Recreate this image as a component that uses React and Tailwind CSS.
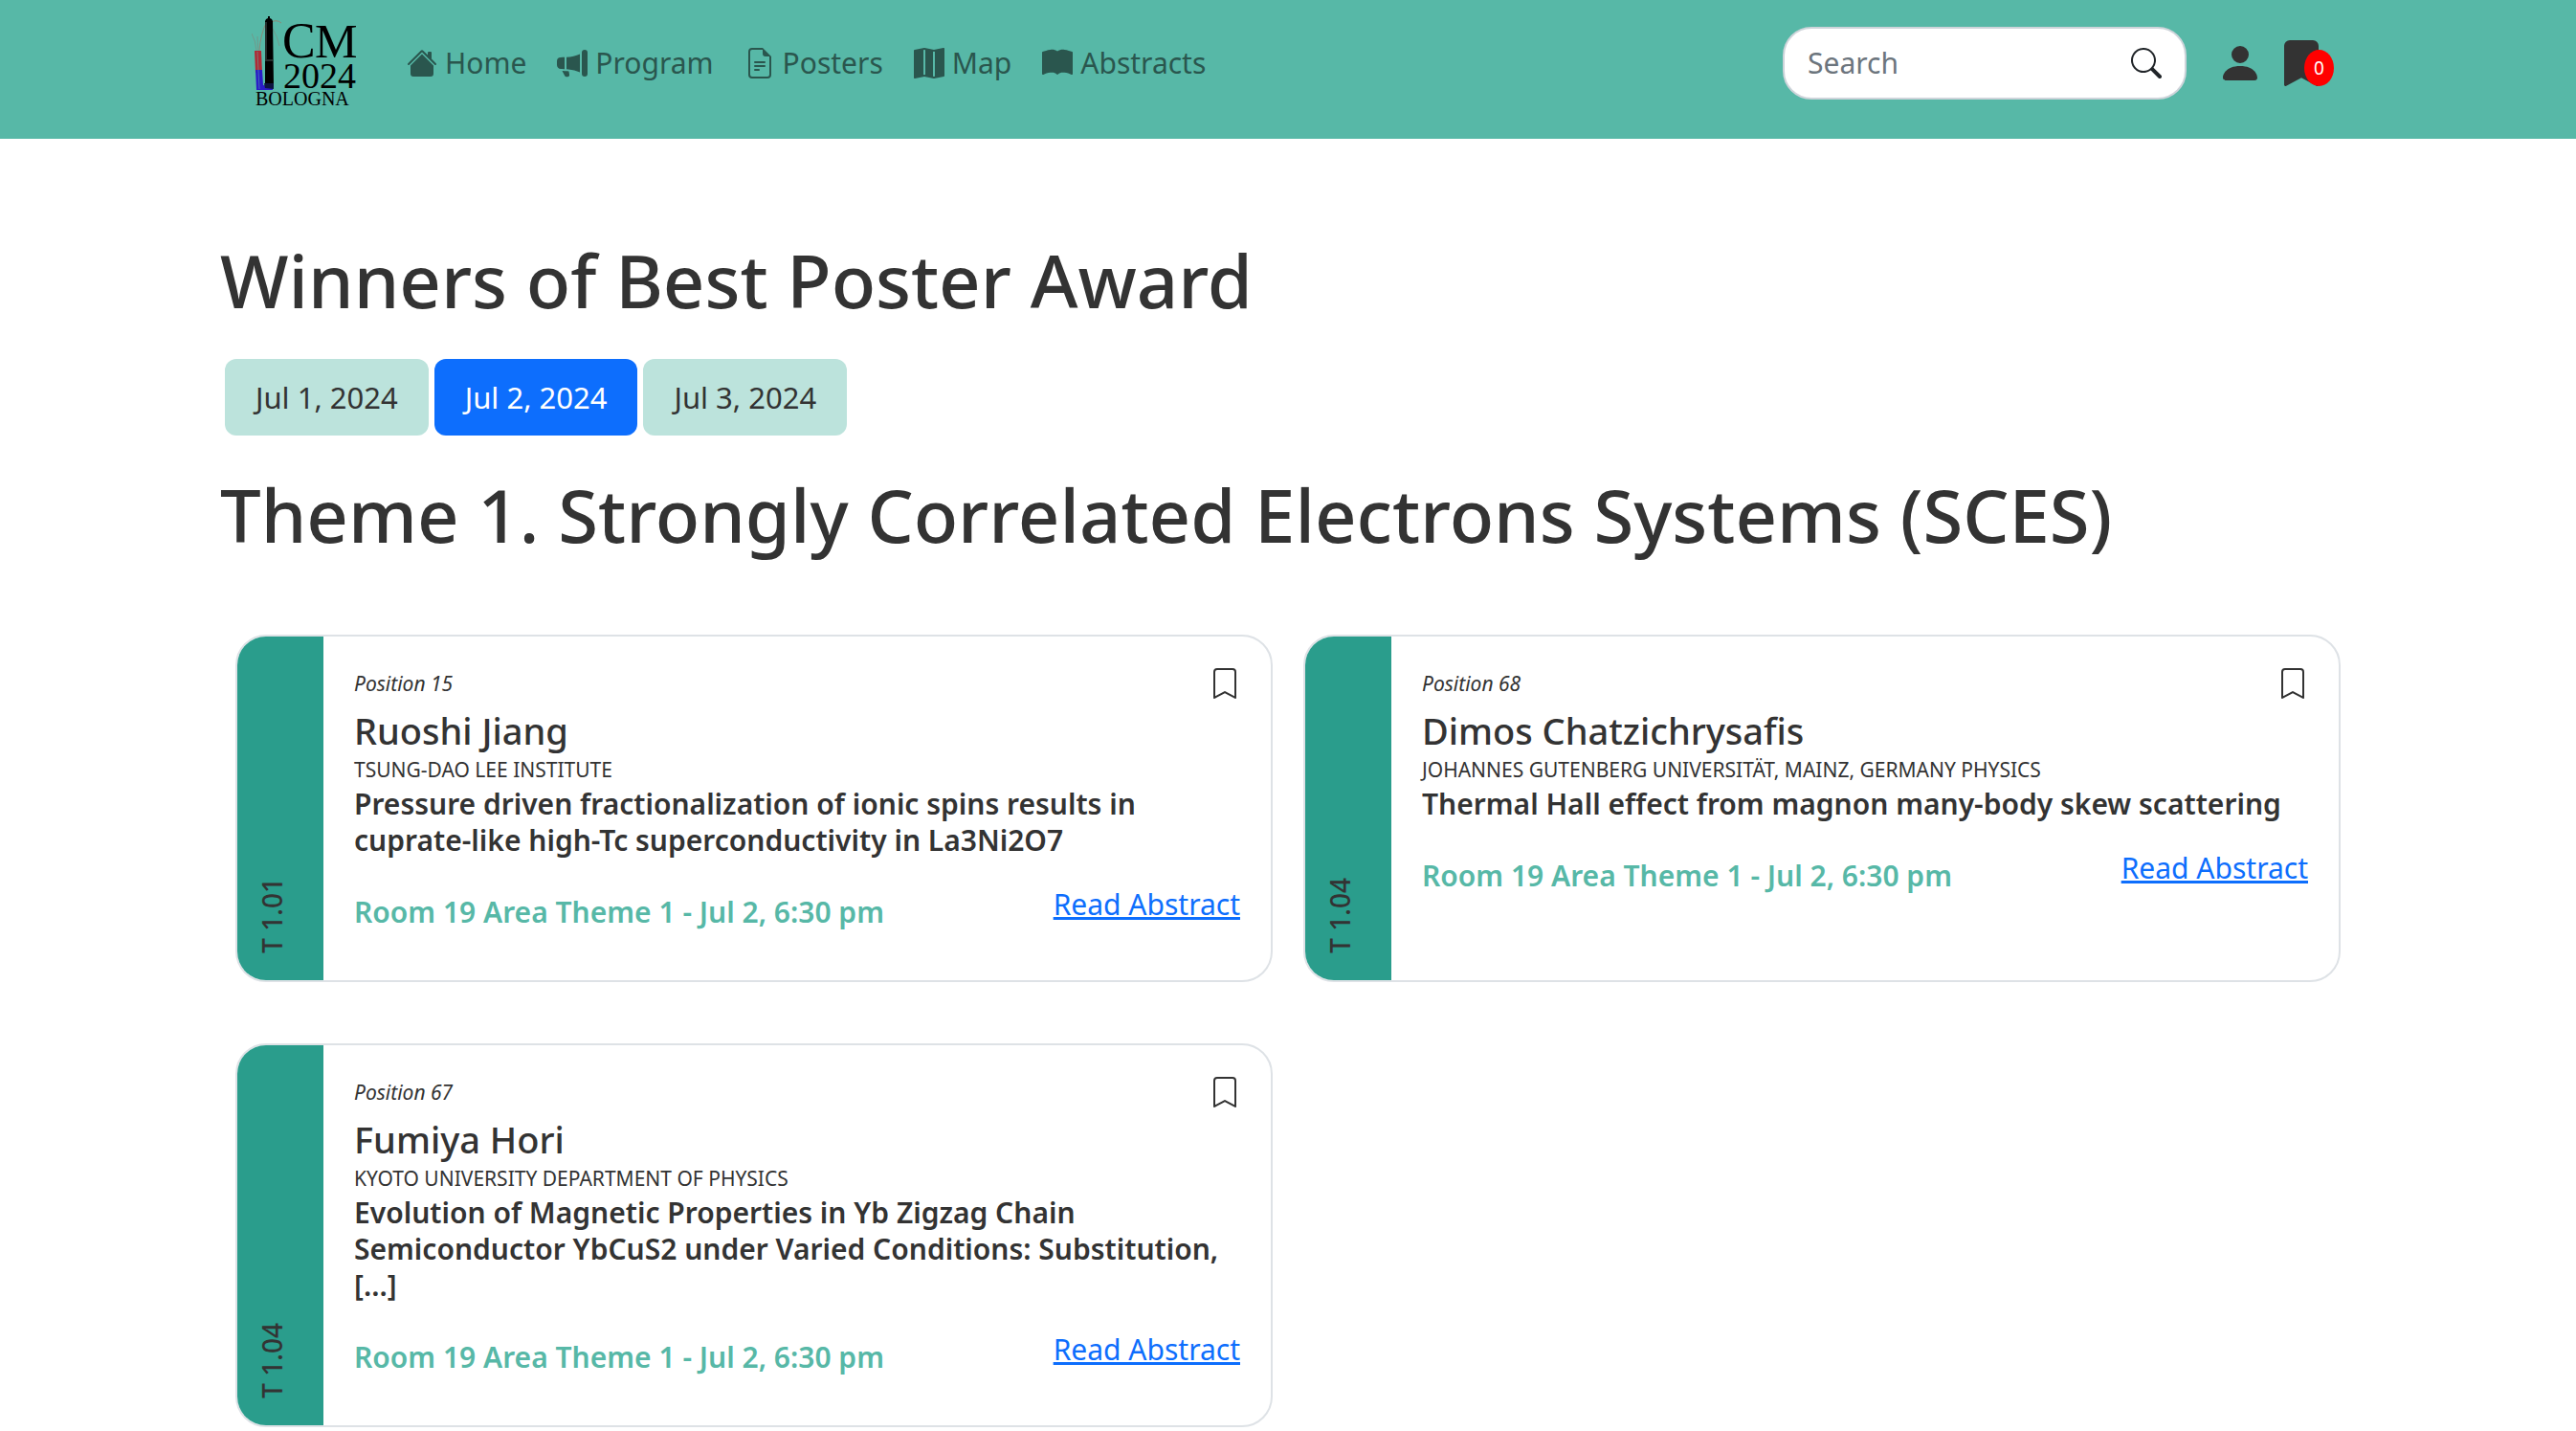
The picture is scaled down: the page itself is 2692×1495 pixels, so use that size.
import {
  BsHouseFill,
  BsMegaphoneFill,
  BsFileEarmarkText,
  BsMapFill,
  BsBookFill,
  BsSearch,
  BsPersonFill,
  BsBookmarkFill,
  BsBookmark,
} from "react-icons/bs";

const navItems = [
  { label: "Home", Icon: BsHouseFill },
  { label: "Program", Icon: BsMegaphoneFill },
  { label: "Posters", Icon: BsFileEarmarkText },
  { label: "Map", Icon: BsMapFill },
  { label: "Abstracts", Icon: BsBookFill },
];

const days = ["Jul 1, 2024", "Jul 2, 2024", "Jul 3, 2024"];
const activeDay = "Jul 2, 2024";

const posters = [
  {
    code: "T 1.01",
    position: "Position 15",
    author: "Ruoshi Jiang",
    institute: "TSUNG-DAO LEE INSTITUTE",
    title:
      "Pressure driven fractionalization of ionic spins results in cuprate-like high-Tc superconductivity in La3Ni2O7",
    slot: "Room 19 Area Theme 1 - Jul 2, 6:30 pm",
  },
  {
    code: "T 1.04",
    position: "Position 68",
    author: "Dimos Chatzichrysafis",
    institute: "JOHANNES GUTENBERG UNIVERSITÄT, MAINZ, GERMANY PHYSICS",
    title: "Thermal Hall effect from magnon many-body skew scattering",
    slot: "Room 19 Area Theme 1 - Jul 2, 6:30 pm",
  },
  {
    code: "T 1.04",
    position: "Position 67",
    author: "Fumiya Hori",
    institute: "KYOTO UNIVERSITY DEPARTMENT OF PHYSICS",
    title:
      "Evolution of Magnetic Properties in Yb Zigzag Chain Semiconductor YbCuS2 under Varied Conditions: Substitution, [...]",
    slot: "Room 19 Area Theme 1 - Jul 2, 6:30 pm",
  },
];

function Logo() {
  return (
    <svg viewBox="0 0 130 100" className="h-[100px] w-[130px]" role="img" aria-label="ICM 2024 Bologna">
      <g fill="none" strokeWidth="1">
        <path d="M5 37 Q4 26 0 19" stroke="#6f9a8c" />
        <path d="M8 37 Q9 20 16 6" stroke="#8a8a78" />
        <path d="M7 37 Q6 28 6 22" stroke="#6f9a8c" />
        <path d="M21 7 Q26 4 31 8" stroke="#8a8a78" />
        <path d="M22 14 Q27 22 29 32" stroke="#6f9a8c" />
      </g>
      <path d="M14 6 L15 4 L17 3 V1 H19 V3 L21 4 L22 6 L23 74 H14 Z" fill="#000" />
      <path d="M15 7 V46 M14 47 H22" stroke="#4b5b58" strokeWidth="1" fill="none" />
      <path d="M3 37 H10 L11 60 H4 Z" fill="#b02a35" />
      <path d="M4 57 H11 L12 73 L22 74 V78 H5 Z" fill="#2a1cc8" />
      <path d="M6 38 L8 77" stroke="#57b8a7" strokeWidth="1" opacity="0.5" />
      <path d="M13 71 H23 V77 L14 76 Z" fill="#0d1440" />
      <g fill="#000" fontFamily="'Liberation Serif', serif">
        <text x="32" y="44" fontSize="52">C</text>
        <text x="66" y="44" fontSize="50">M</text>
        <text x="33" y="76" fontSize="38">2024</text>
        <text x="4" y="94" fontSize="20">BOLOGNA</text>
      </g>
    </svg>
  );
}

function Header() {
  return (
    <header className="bg-[#57b8a7] pt-4 pb-[29px]">
      <div className="mx-auto flex h-[100px] max-w-[2230px] items-center px-8">
        <a href="#" className="shrink-0">
          <Logo />
        </a>
        <nav className="ml-8 flex gap-8">
          {navItems.map(({ label, Icon }) => (
            <a
              key={label}
              href="#"
              className="flex items-center gap-2 text-[30px] leading-[48px] text-[#2a564e]"
            >
              <Icon className="size-8" aria-hidden="true" />
              {label}
            </a>
          ))}
        </nav>
        <form
          className="ml-auto flex h-[76px] w-[422px] items-center rounded-[30px] border-2 border-[#ced4da] bg-white px-6"
          onSubmit={(e) => e.preventDefault()}
        >
          <input
            type="search"
            placeholder="Search"
            aria-label="Search"
            className="min-w-0 flex-1 bg-transparent text-[30px] leading-[48px] outline-none placeholder:text-[#6c757d]"
          />
          <button type="submit" aria-label="Submit search" className="text-[#212529]">
            <BsSearch className="size-8" />
          </button>
        </form>
        <button type="button" aria-label="Account" className="ml-8 text-[#333]">
          <BsPersonFill className="size-12" />
        </button>
        <button type="button" aria-label="Saved posters" className="relative ml-4 text-[#333]">
          <BsBookmarkFill className="size-12" />
          <span className="absolute top-[10px] left-[27px] flex h-[38px] w-[31px] items-center justify-center rounded-[50%] bg-[#ff0000] text-[19px] text-white">
            0
          </span>
        </button>
      </div>
    </header>
  );
}

function PosterCard({ poster }) {
  return (
    <article className="flex overflow-hidden rounded-[32px] border-2 border-[#dee2e6]">
      <div className="flex w-[90px] shrink-0 items-end bg-[#2a9d8c] pb-7 pl-3">
        <p className="rotate-180 text-[28px] leading-[48px] font-medium [writing-mode:vertical-rl]">
          {poster.code}
        </p>
      </div>
      <div className="min-w-0 flex-1 px-8 pt-8 pb-[47px]">
        <div className="flex items-center justify-between">
          <p className="text-[21px] leading-[34px] italic">{poster.position}</p>
          <button type="button" aria-label={`Save poster by ${poster.author}`}>
            <BsBookmark className="size-8" />
          </button>
        </div>
        <h2 className="mt-2 text-[38px] leading-[48px] font-medium">{poster.author}</h2>
        <p className="text-[21px] leading-[34px]">{poster.institute}</p>
        <h3 className="text-[30px] leading-[38px] font-semibold">{poster.title}</h3>
        <div className="mt-6 flex justify-between">
          <p className="pt-2 text-[30px] leading-[48px] font-semibold text-[#57b8a7]">{poster.slot}</p>
          <a
            href="#"
            className="text-[30px] leading-[48px] text-[#0d6efd] underline"
          >
            Read Abstract
          </a>
        </div>
      </div>
    </article>
  );
}

export default function App() {
  return (
    <div className="min-h-screen bg-white font-['Noto_Sans',sans-serif] text-[#333]">
      <Header />
      <main className="mx-auto max-w-[2232px] pt-[100px]">
        <h1 className="text-[76px] leading-[96px] font-medium">Winners of Best Poster Award</h1>
        <div className="mt-[34px] flex gap-[6px] pl-[5px]">
          {days.map((day) => (
            <button
              key={day}
              type="button"
              aria-pressed={day === activeDay}
              className={
                day === activeDay
                  ? "rounded-xl bg-[#0d6efd] px-8 py-4 text-[31px] leading-[48px] text-white"
                  : "rounded-xl bg-[#bce3dc] px-8 py-4 text-[31px] leading-[48px]"
              }
            >
              {day}
            </button>
          ))}
        </div>
        <h1 className="mt-[35px] text-[76px] leading-[96px] font-medium">
          Theme 1. Strongly Correlated Electrons Systems (SCES)
        </h1>
        <div className="mt-[77px] grid grid-cols-2 gap-x-8 gap-y-16 px-4">
          {posters.map((poster) => (
            <PosterCard key={poster.position} poster={poster} />
          ))}
        </div>
      </main>
    </div>
  );
}
